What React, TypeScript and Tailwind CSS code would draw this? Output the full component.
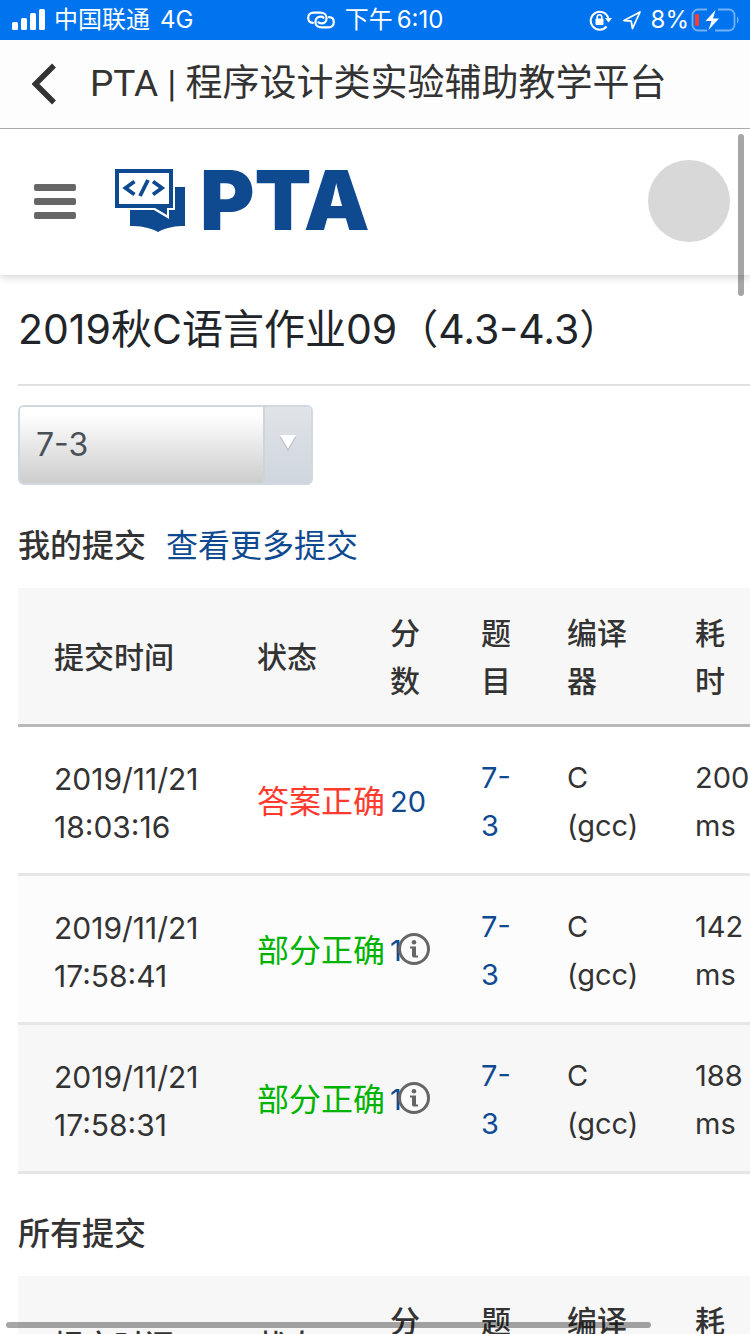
import React from 'react';

interface Submission {
  date: string;
  time: string;
  status: 'accepted' | 'partial';
  score: string;
  problem: string;
  compiler: string;
  duration: string;
}

const submissions: Submission[] = [
  { date: '2019/11/21', time: '18:03:16', status: 'accepted', score: '20', problem: '7-3', compiler: 'C (gcc)', duration: '200 ms' },
  { date: '2019/11/21', time: '17:58:41', status: 'partial', score: '1', problem: '7-3', compiler: 'C (gcc)', duration: '142 ms' },
  { date: '2019/11/21', time: '17:58:31', status: 'partial', score: '1', problem: '7-3', compiler: 'C (gcc)', duration: '188 ms' },
];

const columns = ['提交时间', '状态', '分数', '题目', '编译器', '耗时'];

const StatusBar: React.FC = () => (
  <div className="relative flex h-10 shrink-0 items-center justify-between bg-[#0073ee] text-2xl text-white">
    <div className="flex items-center pl-3">
      <svg className="mr-2 h-[22px] w-[34px]" viewBox="0 0 34 22" fill="currentColor">
        <rect x="0" y="13" width="6" height="8" rx="1.5" />
        <rect x="9" y="9" width="6" height="12" rx="1.5" />
        <rect x="18" y="4" width="6" height="17" rx="1.5" />
        <rect x="27" y="0" width="6" height="21" rx="1.5" />
      </svg>
      <span>中国联通</span>
      <span className="ml-2.5">4G</span>
    </div>

    <div className="absolute inset-0 flex items-center justify-center">
      <svg className="mr-2.5 h-5 w-7" viewBox="0 0 28 20" fill="none" stroke="currentColor" strokeWidth="2.2" strokeLinecap="round">
        <path d="M6 12.800C3 12.800 1.200 10.800 1.200 7.800C1.200 4.800 3.200 2.600 6.500 2.600H13.500C17 2.600 19.600 4.800 19.600 8C19.600 11.200 17.500 13.400 14.500 13.400C13 13.400 12 13 11.400 12.300" />
        <path d="M22 7.200C25 7.200 26.800 9.200 26.800 12.200C26.800 15.200 24.800 17.400 21.500 17.400H14.500C11 17.400 8.400 15.200 8.400 12C8.400 8.800 10.500 6.600 13.500 6.600C15 6.600 16 7 16.600 7.700" />
      </svg>
      <span>下午</span>
      <span className="ml-1">6:10</span>
    </div>

    <div className="flex items-center pr-2.5">
      <svg className="mr-2.5 h-[22px] w-6" viewBox="0 0 24 22" fill="none" stroke="currentColor" strokeWidth="2">
        <path d="M17.600 17.500A9 9 0 1 1 19.300 9" />
        <path d="M16 9H23L19.500 13.500Z" fill="currentColor" stroke="none" />
        <rect x="6.500" y="9.500" width="8" height="6.500" rx="1" fill="currentColor" stroke="none" />
        <path d="M8.200 10V8A2.300 2.300 0 0 1 12.800 8V10" strokeWidth="1.600" />
      </svg>
      <svg className="mr-2.5 h-5 w-[18px]" viewBox="0 0 18 20" fill="none" stroke="currentColor" strokeWidth="1.800" strokeLinejoin="round">
        <path d="M17 2L1 10.500L8.200 11.200L9.500 18.500Z" />
      </svg>
      <span className="mr-0.5">8%</span>
      <svg className="h-6 w-[49px]" viewBox="0 0 49 24" fill="none">
        <path d="M16 1.500H7A5.500 5.500 0 0 0 1.500 7V17A5.500 5.500 0 0 0 7 22.500H16M27 1.500H38A5.500 5.500 0 0 1 43.500 7V17A5.500 5.500 0 0 1 38 22.500H24" stroke="#73b2f7" strokeWidth="1.800" />
        <rect x="4" y="6" width="4" height="12" rx="1" fill="#ff3b30" />
        <path d="M24.500 2L14.500 13H20.500L17.500 22L28 10.500H22Z" fill="white" />
        <path d="M46 8.500C48 9.500 48 14.500 46 15.500Z" fill="#73b2f7" />
      </svg>
    </div>
  </div>
);

const Logo: React.FC = () => (
  <a href="#home" className="flex h-16 items-center text-[#0f4a91]">
    <svg className="h-16 w-[71px]" viewBox="0 0 71 64" fill="none">
      <path d="M60 18H70V57C61 57 52 58 43 63C34 58 25 57 15 57V40H60Z" fill="currentColor" />
      <path d="M0 -1H60V41H54V50L39 41H0Z" fill="white" />
      <path d="M0 0H58V39H52V46L40 39H0Z" fill="currentColor" />
      <rect x="4" y="4" width="50" height="31" fill="white" />
      <path d="M19.500 12.500L10.500 19L19.500 25.500M38 12.500L47 19L38 25.500M33 11L25 27" stroke="currentColor" strokeWidth="3.800" />
    </svg>
    <span className="ml-3.5 pb-0.5 text-[83px] leading-none font-black">PTA</span>
  </a>
);

const InfoIcon: React.FC = () => (
  <svg className="h-8 w-8" viewBox="0 0 32 32">
    <circle cx="16" cy="16" r="14.500" fill="#fbfbfb" stroke="#666" strokeWidth="3" />
    <circle cx="16" cy="9.300" r="2.300" fill="#666" />
    <path d="M12 13.500H18V22.500H20V24.500H15.500Q14 24.500 14 22.800V15.500H12Z" fill="#666" />
  </svg>
);

const SubmissionTable: React.FC<{ label: string; rows: Submission[] }> = ({ label, rows }) => (
  <table aria-label={label} className="w-[960px] table-fixed border-collapse text-left text-[#333]">
    <colgroup>
      <col className="w-[203px]" />
      <col className="w-[133px]" />
      <col className="w-[91px]" />
      <col className="w-[86px]" />
      <col className="w-32" />
      <col />
    </colgroup>
    <thead>
      <tr className="border-b-[3px] border-[#b8b8b8] bg-[#f7f7f7]">
        {columns.map((column, i) => (
          <th key={column} scope="col" className="pt-[21px] pb-[19px] pl-9 text-3xl leading-[48px] font-medium">
            <div className={i < 2 ? 'whitespace-nowrap' : i === 4 ? 'w-16' : 'w-8'}>{column}</div>
          </th>
        ))}
      </tr>
    </thead>
    <tbody className="text-[29px] leading-[48px]">
      {rows.map((row) => (
        <tr key={row.time} className="border-b-[3px] border-[#e6e6e6] even:bg-[#fcfcfc] last:bg-[#f7f7f7]">
          <td className="pt-7 pb-[22px] pl-9 text-3xl leading-[48px]">
            {row.date}
            <br />
            {row.time}
          </td>
          <td className="pt-1 pl-9">
            <div className="relative text-[32px] whitespace-nowrap">
              <span className={row.status === 'accepted' ? 'text-[#ff3b30]' : 'text-[#00b300]'}>
                {row.status === 'accepted' ? '答案正确' : '部分正确'}
              </span>
              {row.status === 'partial' && (
                <button aria-label="详情" className="absolute top-1.5 left-[141px] z-10">
                  <InfoIcon />
                </button>
              )}
            </div>
          </td>
          <td className="pt-1 pl-9">
            <a href="#score" className="text-[#0f4a91]">{row.score}</a>
          </td>
          <td className="pt-1 pl-9">
            <a href="#problem" className="block w-9 text-[#0f4a91]">{row.problem}</a>
          </td>
          <td className="pt-1 pl-9">
            <div className="w-20">{row.compiler}</div>
          </td>
          <td className="pt-1 pl-9">
            <div className="w-16">{row.duration}</div>
          </td>
        </tr>
      ))}
    </tbody>
  </table>
);

export default function App() {
  return (
    <div className="flex h-screen flex-col overflow-hidden bg-white font-['Inter','Noto_Sans_CJK_SC',sans-serif]">
      <StatusBar />

      {/* Title bar */}
      <div className="flex h-[89px] shrink-0 items-center border-b border-[#aaa] bg-[#fdfdfd] pl-8">
        <button aria-label="返回">
          <svg className="h-[42px] w-6" viewBox="0 0 24 42" fill="none" stroke="#333" strokeWidth="5.500">
            <path d="M22 2.500L3.500 21L22 39.500" />
          </svg>
        </button>
        <div className="ml-[34px] font-['Roboto','Noto_Sans_CJK_SC',sans-serif] text-[37px] whitespace-nowrap text-[#333]">
          PTA | 程序设计类实验辅助教学平台
        </div>
      </div>

      {/* Web view */}
      <div className="relative min-h-0 flex-1 overflow-hidden">
        <header className="flex h-[146px] items-center justify-between pr-5 pb-0.5 pl-[34px] shadow-[0_2px_8px_rgba(0,0,0,0.18)]">
          <div className="flex items-center">
            <button aria-label="菜单" className="mr-[39px] flex w-[42px] flex-col gap-[7px]">
              <span className="h-[7px] rounded-xs bg-[#666]" />
              <span className="h-[7px] rounded-xs bg-[#666]" />
              <span className="h-[7px] rounded-xs bg-[#666]" />
            </button>
            <Logo />
          </div>
          <button aria-label="用户" className="h-[82px] w-[82px] rounded-full bg-[#d8d8d8]" />
        </header>

        <main className="pl-[18px]">
          <h1 className="flex h-[111px] items-center border-b-2 border-[#e0e0e0] text-[41px] whitespace-nowrap text-[#212529]">
            2019秋C语言作业09（4.3-4.3）
          </h1>

          <div className="relative mt-[19px] h-20 w-[295px] overflow-hidden rounded-md border-2 border-[#d1d8df]">
            <select
              aria-label="题目"
              className="h-full w-full appearance-none bg-linear-to-b from-white from-10% to-[#cdcdcd] pl-4 text-[32px] text-[#495057] outline-none"
            >
              <option>7-3</option>
            </select>
            <div className="pointer-events-none absolute inset-y-0 right-0 flex w-12 items-center justify-center border-l-2 border-[#cdd4dc] bg-linear-to-b from-[#e0e4e8] to-[#d0d6de]">
              <svg className="mb-1 h-5 w-5" viewBox="0 0 20 20">
                <path d="M2 4H18L10 18Z" fill="#b5bac0" />
                <path d="M2 2H18L10 16Z" fill="white" />
              </svg>
            </div>
          </div>

          <div className="flex h-[103px] items-center pt-[18px] text-[32px]">
            <h2 className="font-medium text-[#333]">我的提交</h2>
            <a href="#more" className="ml-5 text-[#0f4a91]">查看更多提交</a>
          </div>
          <SubmissionTable label="我的提交" rows={submissions} />

          <h2 className="flex h-[102px] items-center pt-[18px] text-[32px] font-medium text-[#333]">所有提交</h2>
          <SubmissionTable label="所有提交" rows={[]} />
        </main>

        {/* Scroll indicators */}
        <div className="absolute top-[5px] right-1.5 h-[162px] w-1.5 rounded-full bg-black/35" />
        <div className="absolute bottom-1.5 left-1.5 h-1.5 w-[86%] rounded-full bg-black/35" />
      </div>
    </div>
  );
}
